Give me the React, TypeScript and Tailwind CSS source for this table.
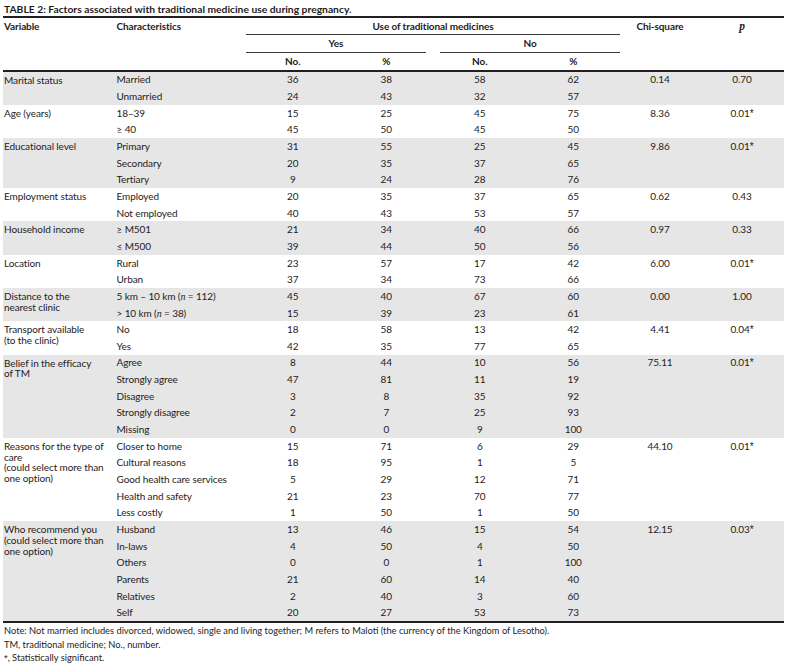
type Row = [string, string, string, string, string];

type Group = {
  label: string[];
  gray: boolean;
  chi: string;
  p: string;
  rows: Row[];
};

const groups: Group[] = [
  {
    label: ["Marital status"],
    gray: true,
    chi: "0.14",
    p: "0.70",
    rows: [
      ["Married", "36", "38", "58", "62"],
      ["Unmarried", "24", "43", "32", "57"],
    ],
  },
  {
    label: ["Age (years)"],
    gray: false,
    chi: "8.36",
    p: "0.01*",
    rows: [
      ["18–39", "15", "25", "45", "75"],
      ["≥ 40", "45", "50", "45", "50"],
    ],
  },
  {
    label: ["Educational level"],
    gray: true,
    chi: "9.86",
    p: "0.01*",
    rows: [
      ["Primary", "31", "55", "25", "45"],
      ["Secondary", "20", "35", "37", "65"],
      ["Tertiary", "9", "24", "28", "76"],
    ],
  },
  {
    label: ["Employment status"],
    gray: false,
    chi: "0.62",
    p: "0.43",
    rows: [
      ["Employed", "20", "35", "37", "65"],
      ["Not employed", "40", "43", "53", "57"],
    ],
  },
  {
    label: ["Household income"],
    gray: true,
    chi: "0.97",
    p: "0.33",
    rows: [
      ["≥ M501", "21", "34", "40", "66"],
      ["≤ M500", "39", "44", "50", "56"],
    ],
  },
  {
    label: ["Location"],
    gray: false,
    chi: "6.00",
    p: "0.01*",
    rows: [
      ["Rural", "23", "57", "17", "42"],
      ["Urban", "37", "34", "73", "66"],
    ],
  },
  {
    label: ["Distance to the", "nearest clinic"],
    gray: true,
    chi: "0.00",
    p: "1.00",
    rows: [
      ["5 km – 10 km (n = 112)", "45", "40", "67", "60"],
      ["> 10 km (n = 38)", "15", "39", "23", "61"],
    ],
  },
  {
    label: ["Transport available", "(to the clinic)"],
    gray: false,
    chi: "4.41",
    p: "0.04*",
    rows: [
      ["No", "18", "58", "13", "42"],
      ["Yes", "42", "35", "77", "65"],
    ],
  },
  {
    label: ["Belief in the efficacy", "of TM"],
    gray: true,
    chi: "75.11",
    p: "0.01*",
    rows: [
      ["Agree", "8", "44", "10", "56"],
      ["Strongly agree", "47", "81", "11", "19"],
      ["Disagree", "3", "8", "35", "92"],
      ["Strongly disagree", "2", "7", "25", "93"],
      ["Missing", "0", "0", "9", "100"],
    ],
  },
  {
    label: ["Reasons for the type of", "care", "(could select more than", "one option)"],
    gray: false,
    chi: "44.10",
    p: "0.01*",
    rows: [
      ["Closer to home", "15", "71", "6", "29"],
      ["Cultural reasons", "18", "95", "1", "5"],
      ["Good health care services", "5", "29", "12", "71"],
      ["Health and safety", "21", "23", "70", "77"],
      ["Less costly", "1", "50", "1", "50"],
    ],
  },
  {
    label: ["Who recommend you", "(could select more than", "one option)"],
    gray: true,
    chi: "12.15",
    p: "0.03*",
    rows: [
      ["Husband", "13", "46", "15", "54"],
      ["In-laws", "4", "50", "4", "50"],
      ["Others", "0", "0", "1", "100"],
      ["Parents", "21", "60", "14", "40"],
      ["Relatives", "2", "40", "3", "60"],
      ["Self", "20", "27", "53", "73"],
    ],
  },
];

// "(n = 112)" -> italic n
function Characteristic({ text }: { text: string }) {
  const m = text.match(/^(.*\()n( = .*)$/);
  if (!m) return <>{text}</>;
  return (
    <>
      {m[1]}
      <span className="font-['Liberation_Serif',serif] italic">n</span>
      {m[2]}
    </>
  );
}

// value with a trailing "*" gets a full-height asterisk
function Stat({ v }: { v: string }) {
  if (!v.endsWith("*")) return <>{v}</>;
  return (
    <>
      {v.slice(0, -1)}
      <span className="font-['Liberation_Sans',sans-serif]">*</span>
    </>
  );
}

function GroupRows({ g }: { g: Group }) {
  return (
    <div className={`flex ${g.gray ? "bg-[#e6e6e6]" : "bg-white"}`}>
      <div className="w-[109px] shrink-0 pl-[1px] pt-[3px] leading-[10.7px] whitespace-nowrap">
        {g.label.map((l) => (
          <div key={l}>{l}</div>
        ))}
      </div>
      <div className="w-[508px] shrink-0">
        {g.rows.map((r) => (
          <div
            key={r[0]}
            className="grid h-[16.67px] grid-cols-[134px_93.5px_93.5px_93.5px_93.5px] items-center"
          >
            <div className="pl-[4.5px] whitespace-nowrap">
              <Characteristic text={r[0]} />
            </div>
            <div className="text-center">{r[1]}</div>
            <div className="text-center">{r[2]}</div>
            <div className="text-center">{r[3]}</div>
            <div className="text-center">{r[4]}</div>
          </div>
        ))}
      </div>
      <div className="flex h-[16.67px] w-[80px] shrink-0 items-center justify-center">{g.chi}</div>
      <div className="flex h-[16.67px] w-[84px] shrink-0 items-center justify-center">
        <Stat v={g.p} />
      </div>
    </div>
  );
}

export default function App() {
  return (
    <div className="h-[671px] w-[786px] bg-white font-['Lato',sans-serif] text-[10px] tracking-[-0.1px] text-[#1f1b1c]">
      <div className="ml-[3px] w-[781px]">
        <div className="h-[16px] pl-[1px] pt-[3px] text-[10.3px] leading-[13px] font-bold tracking-normal">
          TABLE 2: Factors associated with traditional medicine use during pregnancy.
        </div>
        <div className="h-[2px] bg-[#231f20]" />

        {/* header */}
        <div className="font-bold">
          <div className="grid h-[17px] grid-cols-[109px_134px_374px_80px_84px] items-center">
            <div className="pl-[1px]">Variable</div>
            <div className="pl-[4.5px]">Characteristics</div>
            <div className="flex h-full items-center justify-center border-b border-[#3a3a3a]">
              Use of traditional medicines
            </div>
            <div className="text-center">Chi-square</div>
            <div className="text-center font-['Liberation_Serif',serif] text-[11.5px] italic">p</div>
          </div>
          <div className="grid h-[18px] grid-cols-[243px_187px_187px] items-center">
            <div />
            <div className="mr-[7px] flex h-full items-center justify-center border-b border-[#3a3a3a]">
              Yes
            </div>
            <div className="ml-[7px] flex h-full items-center justify-center border-b border-[#3a3a3a]">
              No
            </div>
          </div>
          <div className="grid h-[17px] grid-cols-[243px_93.5px_93.5px_93.5px_93.5px] items-center">
            <div />
            <div className="text-center">No.</div>
            <div className="text-center">%</div>
            <div className="text-center">No.</div>
            <div className="text-center">%</div>
          </div>
        </div>
        <div className="h-[1.5px] bg-[#231f20]" />

        {groups.map((g) => (
          <GroupRows key={g.label[0]} g={g} />
        ))}

        <div className="h-[2px] bg-[#231f20]" />

        <div className="pl-[1px] pt-[1px] text-[9.3px] leading-[13.5px] tracking-normal">
          <p>
            Note: Not married includes divorced, widowed, single and living together; M refers to
            Maloti (the currency of the Kingdom of Lesotho).
          </p>
          <p>TM, traditional medicine; No., number.</p>
          <p>
            <span className="font-['Liberation_Sans',sans-serif]">*</span>, Statistically significant.
          </p>
        </div>
      </div>
    </div>
  );
}
